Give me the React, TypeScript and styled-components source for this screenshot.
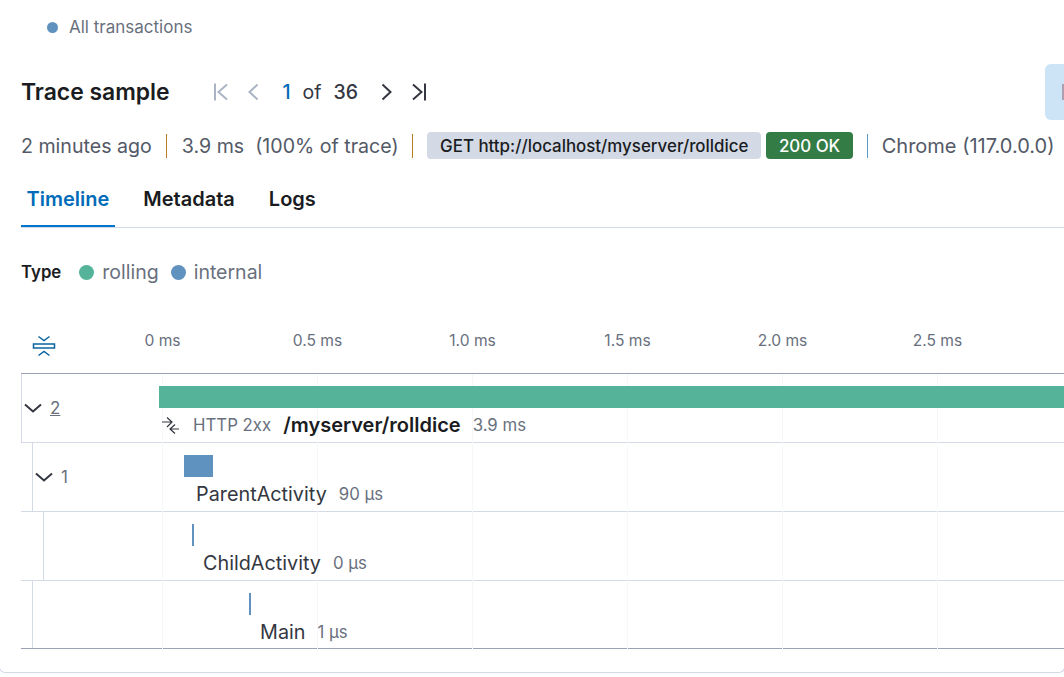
import React from 'react';
import styled, { createGlobalStyle } from 'styled-components';

const GlobalStyle = createGlobalStyle`
  html, body {
    margin: 0;
    padding: 0;
    background: #fff;
    overflow: hidden;
  }
  body {
    font-family: Inter, "Noto Sans", sans-serif;
    color: #343741;
  }
`;

const PX_PER_MS = 310;
const TICKS = ['0 ms', '0.5 ms', '1.0 ms', '1.5 ms', '2.0 ms', '2.5 ms'];

interface ISpan {
  id: string;
  indent: number;
  count?: string;
  underlined?: boolean;
  left: number;
  width: number;
  labelGap: number;
  color: string;
  name: string;
  duration: string;
  root?: boolean;
}

const spans: ISpan[] = [
  { id: 'root', indent: 0, count: '2', underlined: true, left: 0, width: 3.9, labelGap: 0, color: '#54b399', name: '/myserver/rolldice', duration: '3.9 ms', root: true },
  { id: 'parent', indent: 11, count: '1', left: 0.081, width: 0.093, labelGap: 12, color: '#6092c0', name: 'ParentActivity', duration: '90 μs' },
  { id: 'child', indent: 22, left: 0.1065, width: 0.006, labelGap: 11, color: '#6092c0', name: 'ChildActivity', duration: '0 μs' },
  { id: 'main', indent: 11, left: 0.2904, width: 0.006, labelGap: 11, color: '#6092c0', name: 'Main', duration: '1 μs' }
];

const Card = styled.div`
  box-sizing: border-box;
  width: 1066px;
  height: 673px;
  margin-left: -1px;
  padding-left: 21px;
  border: 1px solid #d3dae6;
  border-top: none;
  border-radius: 0 0 6px 6px;
  overflow: hidden;
`;

const LegendTop = styled.div`
  display: flex;
  align-items: center;
  gap: 11px;
  height: 54px;
  padding-left: 26px;
  font-size: 17px;
  color: #69707d;
`;

const Dot = styled.span<{ $color: string; $size: number }>`
  flex: none;
  width: ${p => p.$size}px;
  height: ${p => p.$size}px;
  border-radius: 50%;
  background: ${p => p.$color};
`;

const TitleRow = styled.div`
  display: flex;
  align-items: center;
  height: 56px;
  margin-top: 10px;
`;

const Title = styled.h2`
  flex: none;
  margin: 0;
  width: 192px;
  font-size: 22.9px;
  font-weight: 600;
  color: #1a1c21;
`;

const Pager = styled.div`
  display: flex;
  align-items: center;
  font-size: 19.5px;
  color: #343741;
`;

const PagerIcon = styled.svg<{ $dim?: boolean }>`
  flex: none;
  width: 18px;
  height: 18px;
  fill: none;
  stroke: ${p => (p.$dim ? '#abb4c4' : '#343741')};
  stroke-width: 2;
`;

const PageCurrent = styled.span`
  color: #006bb8;
  font-weight: 500;
  margin-left: 20px;
`;

const PageOf = styled.span`
  margin-left: 12px;
`;

const PageTotal = styled.span`
  font-weight: 500;
  margin: 0 20px 0 12px;
`;

const PagerGap = styled.span<{ $width: number }>`
  flex: none;
  width: ${p => p.$width}px;
`;

const SideButton = styled.div`
  position: relative;
  flex: none;
  width: 60px;
  height: 56px;
  margin-left: auto;
  margin-right: -41px;
  border-radius: 6px;
  background: #cce4f5;
`;

const SideButtonMark = styled.span`
  position: absolute;
  left: 17px;
  top: 20px;
  width: 4px;
  height: 16px;
  background: #ad9fb0;
`;

const MetaRow = styled.div`
  display: flex;
  align-items: center;
  height: 27px;
  margin-top: 12px;
  font-size: 19.6px;
  color: #535966;
  white-space: nowrap;
`;

const MetaDivider = styled.span<{ $color: string; $before: number; $after: number }>`
  flex: none;
  width: 1px;
  height: 24px;
  margin: 0 ${p => p.$after}px 0 ${p => p.$before}px;
  background: ${p => p.$color};
`;

const Badge = styled.span<{ $bg: string; $fg: string; $weight: number; $pad: number }>`
  display: flex;
  align-items: center;
  height: 27px;
  padding: 0 ${p => p.$pad}px;
  border-radius: 4px;
  font-size: 16.9px;
  font-weight: ${p => p.$weight};
  background: ${p => p.$bg};
  color: ${p => p.$fg};

  & + & {
    margin-left: 5px;
  }
`;

const BrowserName = styled.span`
  font-size: 20px;
`;

const Tabs = styled.div`
  display: flex;
  margin-top: 12px;
  height: 56px;
  border-bottom: 1px solid #d3dae6;
`;

const Tab = styled.div<{ $active?: boolean }>`
  display: flex;
  align-items: center;
  height: 56px;
  padding: 0 5.5px;
  margin-right: 23px;
  font-size: 20px;
  font-weight: 600;
  color: ${p => (p.$active ? '#006bb8' : '#1a1c21')};
  box-shadow: ${p => (p.$active ? 'inset 0 -2px 0 #0077cc' : 'none')};
`;

const TypeLegend = styled.div`
  display: flex;
  align-items: center;
  height: 28px;
  margin-top: 30px;
  font-size: 19.5px;
  color: #69707d;
`;

const TypeLabel = styled.span`
  font-size: 16.8px;
  font-weight: 600;
  color: #1a1c21;
  margin-right: 18px;
`;

const TypeItem = styled.span`
  display: flex;
  align-items: center;
  gap: 8px;
  margin-right: 12px;
`;

const Axis = styled.div`
  display: flex;
  align-items: center;
  height: 68px;
  margin-top: 19px;
  white-space: nowrap;
`;

const CollapseButton = styled.svg`
  flex: none;
  width: 24px;
  height: 24px;
  margin: 14px 0 0 10.5px;
  fill: none;
  stroke: #0b64a0;
  stroke-width: 1.5;
`;

const TickList = styled.div`
  display: flex;
  margin: 2px 0 0 29.5px;
`;

const Tick = styled.span`
  flex: none;
  width: 155px;
  text-align: center;
  font-size: 15.6px;
  color: #69707d;
`;

const Waterfall = styled.div`
  position: relative;
  border-top: 1px solid #98a2b3;
`;

const GridLine = styled.span`
  position: absolute;
  top: 0;
  bottom: 0;
  width: 1px;
  background: #f5f7fa;
`;

const Row = styled.div<{ $root?: boolean; $last?: boolean }>`
  box-sizing: border-box;
  display: flex;
  height: ${p => (p.$last ? 68 : 69)}px;
  border-bottom: 1px solid ${p => (p.$last ? '#98a2b3' : '#d3dae6')};
  border-left: ${p => (p.$root ? '1px solid #d3dae6' : 'none')};
`;

const Gutter = styled.div<{ $indent: number }>`
  flex: none;
  box-sizing: border-box;
  display: flex;
  align-items: center;
  gap: 8px;
  margin-left: ${p => p.$indent}px;
  border-left: ${p => (p.$indent ? '1px solid #d3dae6' : 'none')};
  width: ${p => 138 - p.$indent - (p.$indent ? 0 : 1)}px;
  font-size: 17px;
  color: #69707d;
`;

const Chevron = styled.svg`
  flex: none;
  width: 18px;
  height: 18px;
  margin-left: 2px;
  fill: none;
  stroke: #343741;
  stroke-width: 2;
`;

const CountLink = styled.span<{ $underlined?: boolean }>`
  text-decoration: ${p => (p.$underlined ? 'underline' : 'none')};
`;

const Track = styled.div`
  flex: 1;
  min-width: 0;
  overflow: hidden;
  position: relative;
  z-index: 1;
`;

const Bar = styled.div<{ $color: string }>`
  height: 22px;
  margin-top: 12px;
  background: ${p => p.$color};
`;

const SpanLine = styled.div`
  display: flex;
  align-items: center;
  height: 34px;
  white-space: nowrap;
`;

const HttpIcon = styled.svg`
  flex: none;
  width: 17px;
  height: 17px;
  margin: 0 14px 0 3px;
  fill: none;
  stroke: #343741;
  stroke-width: 1.2;
`;

const Status = styled.span`
  font-size: 16.8px;
  color: #69707d;
  margin-right: 12px;
`;

const SpanName = styled.span<{ $root?: boolean }>`
  font-size: ${p => (p.$root ? 20 : 19.8)}px;
  font-weight: ${p => (p.$root ? 600 : 400)};
  color: ${p => (p.$root ? '#1a1c21' : '#343741')};
  margin-right: 12px;
`;

const Duration = styled.span`
  font-size: 16.8px;
  color: #69707d;
`;

export default function App() {
  return (
    <>
      <GlobalStyle />
      <Card>
        <LegendTop>
          <Dot $color="#6092c0" $size={11} />
          All transactions
        </LegendTop>

        <TitleRow>
          <Title>Trace sample</Title>
          <Pager>
            <PagerIcon $dim viewBox="0 0 18 18">
              <path d="M2 .5v17M14 1.500L5.500 9l8.500 7.500" />
            </PagerIcon>
            <PagerGap $width={13.5} />
            <PagerIcon $dim viewBox="0 0 18 18">
              <path d="M12.500 1.500L4.500 9l8 7.500" />
            </PagerIcon>
            <PageCurrent>1</PageCurrent>
            <PageOf>of</PageOf>
            <PageTotal>36</PageTotal>
            <PagerIcon viewBox="0 0 18 18">
              <path d="M4.500 1.500l8 7.500-8 7.500" />
            </PagerIcon>
            <PagerGap $width={15} />
            <PagerIcon viewBox="0 0 18 18">
              <path d="M2 1.500L10.500 9 2 16.500M14 .5v17" />
            </PagerIcon>
          </Pager>
          <SideButton>
            <SideButtonMark />
          </SideButton>
        </TitleRow>

        <MetaRow>
          2 minutes ago
          <MetaDivider $color="#b57c20" $before={14} $after={15} />
          3.9 ms &nbsp;(100% of trace)
          <MetaDivider $color="#b57c20" $before={13.5} $after={14} />
          <Badge $bg="#d3dae6" $fg="#1a1c21" $weight={500} $pad={13}>GET http://localhost/myserver/rolldice</Badge>
          <Badge $bg="#347c45" $fg="#fff" $weight={500} $pad={12.5}>200 OK</Badge>
          <MetaDivider $color="#5a9ac8" $before={14} $after={14} />
          <BrowserName>Chrome (117.0.0.0)</BrowserName>
        </MetaRow>

        <Tabs>
          <Tab $active>Timeline</Tab>
          <Tab>Metadata</Tab>
          <Tab>Logs</Tab>
        </Tabs>

        <TypeLegend>
          <TypeLabel>Type</TypeLabel>
          <TypeItem><Dot $color="#54b399" $size={15} />rolling</TypeItem>
          <TypeItem><Dot $color="#6092c0" $size={15} />internal</TypeItem>
        </TypeLegend>

        <Axis>
          <CollapseButton viewBox="0 0 24 24">
            <path d="M6.500 2.500L12 6.500l5.500-4M6.500 21.500L12 17.500l5.500 4" />
            <rect x="1.500" y="10" width="21" height="4" />
          </CollapseButton>
          <TickList>
            {TICKS.map(t => (
              <Tick key={t}>{t}</Tick>
            ))}
          </TickList>
        </Axis>

        <Waterfall>
          {TICKS.map((t, i) => (
            <GridLine key={t} style={{ left: 141 + i * 155 }} />
          ))}
          {spans.map((s, i) => (
            <Row key={s.id} $root={s.root} $last={i === spans.length - 1}>
              <Gutter $indent={s.indent}>
                {s.count && (
                  <>
                    <Chevron viewBox="0 0 18 18">
                      <path d="M1 5.500l8 7 8-7" />
                    </Chevron>
                    <CountLink $underlined={s.underlined}>{s.count}</CountLink>
                  </>
                )}
              </Gutter>
              <Track>
                <Bar
                  $color={s.color}
                  style={{ marginLeft: s.left * PX_PER_MS, width: Math.max(s.width * PX_PER_MS, 2) }}
                />
                <SpanLine style={{ marginLeft: s.left * PX_PER_MS + s.labelGap }}>
                  {s.root && (
                    <>
                      <HttpIcon viewBox="0 0 17 17">
                        <path d="M0 5h10M5 .5L10 5l-5 5M17 12H8M13 7.500L8 12l5 4.500" />
                      </HttpIcon>
                      <Status>HTTP 2xx</Status>
                    </>
                  )}
                  <SpanName $root={s.root}>{s.name}</SpanName>
                  <Duration>{s.duration}</Duration>
                </SpanLine>
              </Track>
            </Row>
          ))}
        </Waterfall>
      </Card>
    </>
  );
}
